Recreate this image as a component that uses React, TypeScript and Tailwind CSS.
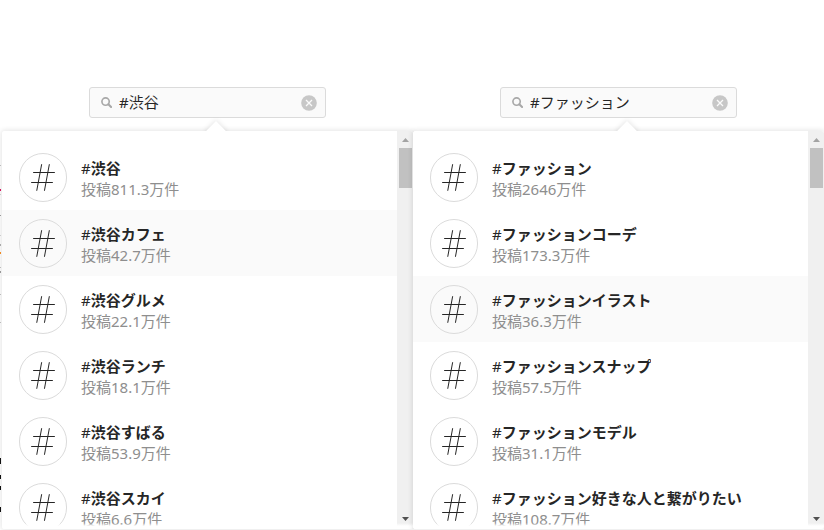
import React, { useState } from "react"

type Tag = { name: string; count: string }

const shibuya: Tag[] = [
  { name: "渋谷", count: "811.3万" },
  { name: "渋谷カフェ", count: "42.7万" },
  { name: "渋谷グルメ", count: "22.1万" },
  { name: "渋谷ランチ", count: "18.1万" },
  { name: "渋谷すばる", count: "53.9万" },
  { name: "渋谷スカイ", count: "6.6万" },
]

const fashion: Tag[] = [
  { name: "ファッション", count: "2646万" },
  { name: "ファッションコーデ", count: "173.3万" },
  { name: "ファッションイラスト", count: "36.3万" },
  { name: "ファッションスナップ", count: "57.5万" },
  { name: "ファッションモデル", count: "31.1万" },
  { name: "ファッション好きな人と繋がりたい", count: "108.7万" },
]

// slivers of the feed behind the dropdown: [y, height, color]
const feedMarks: [number, number, string][] = [
  [165, 1, "#bbb"],
  [189, 2, "#d4145a"],
  [194, 1, "#ccc"],
  [215, 1, "#999"],
  [235, 1, "#ccc"],
  [244, 2, "#aaa"],
  [252, 2, "#f08a24"],
  [267, 1, "#bbb"],
  [271, 2, "#999"],
  [294, 1, "#bbb"],
  [322, 1, "#bbb"],
  [458, 6, "#111"],
  [475, 4, "#111"],
  [486, 4, "#111"],
  [507, 5, "#111"],
]

function HashIcon() {
  return (
    <span className="flex h-[49px] w-12 shrink-0 items-center justify-center rounded-full border border-[#dbdbdb]">
      <svg width="24" height="27" viewBox="0 0 24 27" fill="none" stroke="#262626" strokeLinecap="round" aria-hidden="true">
        <path d="M10.6 .6 5.8 26.4M18.3 .6l-4.8 25.8" strokeWidth="1" />
        <path d="M2.6 8.5h20.8M.6 18.5h20.8" strokeWidth="1.2" />
      </svg>
    </span>
  )
}

function ScrollBar() {
  return (
    <div className="flex w-4 shrink-0 flex-col items-center bg-[#f0f0f0] pl-px">
      <div className="flex h-[17px] shrink-0 items-center">
        <svg width="7" height="4" viewBox="0 0 7 4" fill="#a3a3a3" aria-hidden="true"><path d="M3.5 0 7 4H0z" /></svg>
      </div>
      <div className="h-10 w-[13px] bg-[#c1c1c1]"></div>
      <div className="mt-auto flex h-5 shrink-0 items-center">
        <svg width="7" height="4" viewBox="0 0 7 4" fill="#505050" aria-hidden="true"><path d="M0 0h7L3.5 4z" /></svg>
      </div>
    </div>
  )
}

function SearchPanel({ id, initial, tags, active }: { id: string; initial: string; tags: Tag[]; active: number }) {
  const [value, setValue] = useState<string>(initial)

  return (
    <section className="flex min-h-0 min-w-0 flex-col">
      <div className="mx-auto flex h-[31px] w-[237px] shrink-0 items-center rounded-[3px] border border-[#dbdbdb] bg-[#fafafa] pr-2 pl-[11px]">
        <label htmlFor={id} aria-label="検索">
          <svg width="11" height="11" viewBox="0 0 12 12" fill="none" stroke="#a8a8a8" aria-hidden="true">
            <circle cx="5" cy="5" r="4" strokeWidth="1.8" />
            <path d="m8 8 3 3" strokeWidth="2.2" strokeLinecap="round" />
          </svg>
        </label>
        <input id={id} type="text" className="ml-[7px] min-w-0 grow bg-transparent text-[15px] text-[#262626] outline-none" value={value} onChange={(e) => setValue(e.target.value)} />
        <button type="button" aria-label="クリア" onClick={() => setValue("")}>
          <svg className="block" width="16" height="16" viewBox="0 0 16 16" aria-hidden="true">
            <circle cx="8" cy="8" r="7.8" fill="#c7c7c7" />
            <path d="m5 5 6 6M11 5l-6 6" stroke="#fafafa" strokeWidth="1.3" />
          </svg>
        </button>
      </div>

      <div className="relative mt-[13px] flex min-h-0 grow flex-col rounded-[3px] bg-white shadow-[0_0_5px_1px_rgba(0,0,0,0.1)]">
        <div className="absolute -top-[7px] left-1/2 ml-px size-3.5 rotate-45 bg-white shadow-[0_0_5px_1px_rgba(0,0,0,0.1)]"></div>
        <div className="relative flex min-h-0 grow overflow-hidden rounded-[3px] bg-white">
          <ul className="min-w-0 grow overflow-hidden pt-[13px]">
            {tags.map((tag, index) => (
              <li key={tag.name}>
                <a href="#" className={index === active ? "flex h-[66px] items-center bg-[#fafafa] px-[17px]" : "flex h-[66px] items-center px-[17px]"}>
                  <HashIcon />
                  <span className="ml-3.5 min-w-0 pt-[3px] text-[15px] leading-[21px]">
                    <span className="block truncate font-bold text-[#262626]"><span className="font-normal">#</span>{tag.name}</span>
                    <span className="block truncate text-[#8e8e8e]">投稿{tag.count}件</span>
                  </span>
                </a>
              </li>
            ))}
          </ul>
          <ScrollBar />
          <div className="absolute inset-x-0 bottom-0 h-1.5 bg-linear-to-t from-white from-50% to-transparent"></div>
        </div>
      </div>
    </section>
  )
}

export default function App() {
  return (
    <main className="relative grid h-screen grid-cols-2 grid-rows-[minmax(0,1fr)] overflow-hidden bg-white pt-[87px] pb-px pl-0.5 font-['Noto_Sans','Noto_Sans_CJK_JP',sans-serif]">
      <SearchPanel id="search-shibuya" initial="#渋谷" tags={shibuya} active={1} />
      <SearchPanel id="search-fashion" initial="#ファッション" tags={fashion} active={2} />
      <svg className="absolute top-0 left-0 h-full w-px" aria-hidden="true">
        {feedMarks.map(([y, height, color]) => (
          <rect key={y} x="0" y={y} width="1" height={height} fill={color} />
        ))}
      </svg>
    </main>
  )
}
